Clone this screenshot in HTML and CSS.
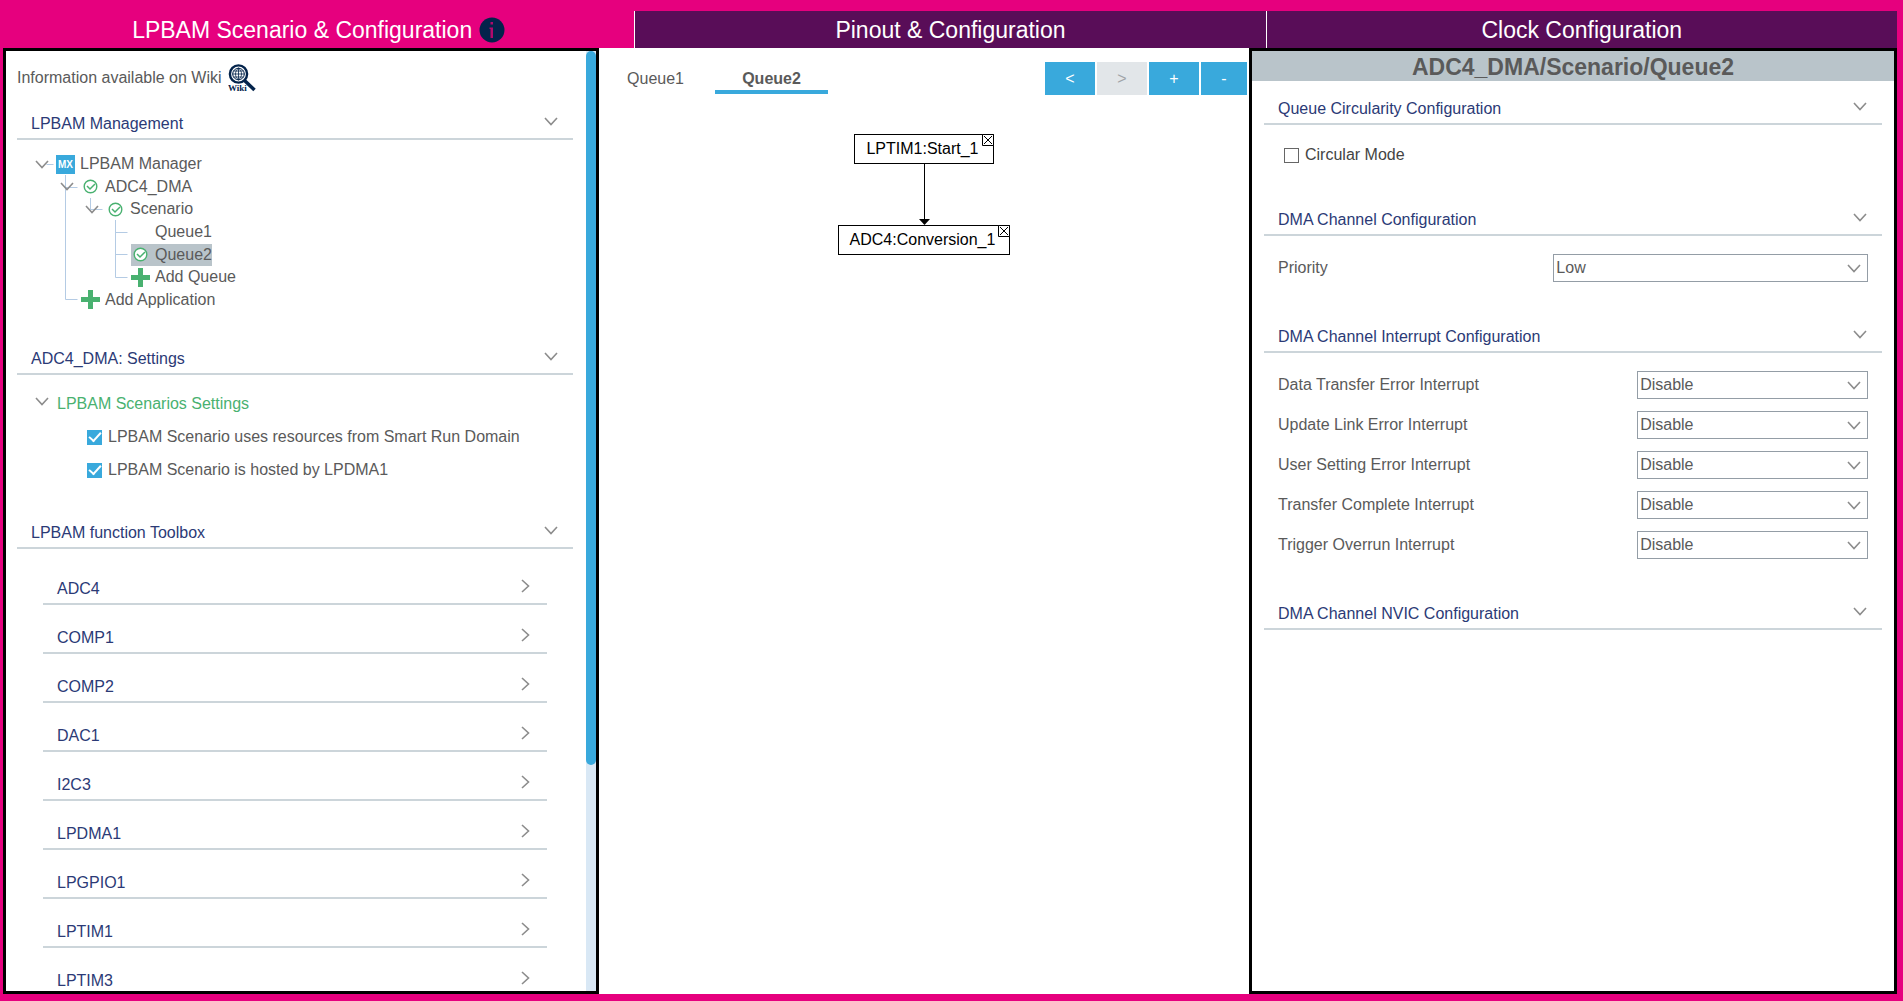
FILE: index.html
```
<!DOCTYPE html>
<html lang="en">
<head>
    <meta charset="UTF-8">
    <meta name="viewport" content="width=device-width, initial-scale=1.0">
    <title>LPBAM Scenario &amp; Configuration</title>
    <link rel="stylesheet" href="styles.css">
</head>
<body>
    <!-- shared icons -->
    <svg class="sprite" width="0" height="0">
        <symbol id="chevron-down" viewBox="0 0 14 9"><path d="M1 1 L7 7.5 L13 1" fill="none" stroke="#8c8c8c" stroke-width="1.6"/></symbol>
        <symbol id="chevron-right" viewBox="0 0 9 14"><path d="M1 1 L7.5 7 L1 13" fill="none" stroke="#8c8c8c" stroke-width="1.6"/></symbol>
        <symbol id="ok" viewBox="0 0 19 19"><circle cx="9.5" cy="9.5" r="6.3" fill="#fff" stroke="#49b170" stroke-width="1.4"/><path d="M6 9 L9 12 L14 7" fill="none" stroke="#49b170" stroke-width="1.5"/></symbol>
        <symbol id="plus" viewBox="0 0 19 19"><path d="M7 0h5v7h7v5h-7v7h-5v-7h-7v-5h7z" fill="#49b170"/></symbol>
    </svg>

    <nav class="main-tabs">
        <button class="main-tab active">LPBAM Scenario &amp; Configuration
            <svg class="info" viewBox="0 0 26 26"><circle cx="13" cy="13" r="12.5" fill="#03234b"/><path d="M11.5 5h2.5v2.5h-2.5zM10.5 10.5h3.5v10.500h-2.5v-9h-1z" fill="#b00a6c"/></svg>
        </button>
        <button class="main-tab">Pinout &amp; Configuration</button>
        <button class="main-tab">Clock Configuration</button>
    </nav>

    <main class="workspace">
        <aside class="panel left-panel">
            <div class="left-content">
                <a class="wiki" href="#">Information available on Wiki
                    <svg class="wiki-icon" viewBox="0 0 28 28">
                        <path d="M16 16 L26.5 26" stroke="#03234b" stroke-width="3.5"/>
                        <circle cx="10.5" cy="10" r="8.6" fill="#fff" stroke="#03234b" stroke-width="2.4"/>
                        <circle cx="10.5" cy="10" r="5.8" fill="none" stroke="#03234b"/>
                        <path d="M10.5 4v12M4.5 10h12M5.5 7h10M5.5 13h10M10.5 4c-4 3-4 9 0 12c4-3 4-9 0-12" fill="none" stroke="#03234b" stroke-width=".8"/>
                        <path d="M0 20h17l3 3v5h-20z" fill="#fff"/>
                        <text x="0" y="27" class="wiki-text">Wiki</text>
                    </svg>
                </a>

                <section class="section">
                    <h2 class="section-title">LPBAM Management<svg class="chevron"><use href="#chevron-down"/></svg></h2>
                    <div class="tree">
                        <svg class="tree-lines" width="160" height="158">
                            <path d="M29.5 11.5h7M48.5 22v124.5h12M48.500 34.5h12M73.500 45v11.5h12M98.5 67v57.5h12M98.5 79.5h12M98.5 101.5h12" fill="none" stroke="#b4cbe4"/>
                        </svg>
                        <div class="node level-1"><svg class="chevron"><use href="#chevron-down"/></svg><span class="node-label"><span class="mx">MX</span>LPBAM Manager</span></div>
                        <div class="node level-2"><svg class="chevron"><use href="#chevron-down"/></svg><span class="node-label"><svg class="icon"><use href="#ok"/></svg>ADC4_DMA</span></div>
                        <div class="node level-3"><svg class="chevron"><use href="#chevron-down"/></svg><span class="node-label"><svg class="icon"><use href="#ok"/></svg>Scenario</span></div>
                        <div class="node level-4"><span class="chevron"></span><span class="node-label"><span class="icon"></span>Queue1</span></div>
                        <div class="node level-4"><span class="chevron"></span><span class="node-label selected"><svg class="icon"><use href="#ok"/></svg>Queue2</span></div>
                        <div class="node level-4"><span class="chevron"></span><span class="node-label"><svg class="icon"><use href="#plus"/></svg>Add Queue</span></div>
                        <div class="node level-2"><span class="chevron"></span><span class="node-label"><svg class="icon"><use href="#plus"/></svg>Add Application</span></div>
                    </div>
                </section>

                <section class="section">
                    <h2 class="section-title">ADC4_DMA: Settings<svg class="chevron"><use href="#chevron-down"/></svg></h2>
                    <div class="settings">
                        <h3 class="settings-title"><svg class="chevron"><use href="#chevron-down"/></svg>LPBAM Scenarios Settings</h3>
                        <label class="check"><input type="checkbox" checked>LPBAM Scenario uses resources from Smart Run Domain</label>
                        <label class="check"><input type="checkbox" checked>LPBAM Scenario is hosted by LPDMA1</label>
                    </div>
                </section>

                <section class="section">
                    <h2 class="section-title">LPBAM function Toolbox<svg class="chevron"><use href="#chevron-down"/></svg></h2>
                    <div class="toolbox">
                        <button class="tool">ADC4<svg class="arrow"><use href="#chevron-right"/></svg></button>
                        <button class="tool">COMP1<svg class="arrow"><use href="#chevron-right"/></svg></button>
                        <button class="tool">COMP2<svg class="arrow"><use href="#chevron-right"/></svg></button>
                        <button class="tool">DAC1<svg class="arrow"><use href="#chevron-right"/></svg></button>
                        <button class="tool">I2C3<svg class="arrow"><use href="#chevron-right"/></svg></button>
                        <button class="tool">LPDMA1<svg class="arrow"><use href="#chevron-right"/></svg></button>
                        <button class="tool">LPGPIO1<svg class="arrow"><use href="#chevron-right"/></svg></button>
                        <button class="tool">LPTIM1<svg class="arrow"><use href="#chevron-right"/></svg></button>
                        <button class="tool">LPTIM3<svg class="arrow"><use href="#chevron-right"/></svg></button>
                    </div>
                </section>
            </div>
            <div class="scrollbar"><div class="thumb"></div></div>
        </aside>

        <section class="middle">
            <div class="queue-bar">
                <button class="queue-tab">Queue1</button>
                <button class="queue-tab active">Queue2</button>
                <div class="queue-actions">
                    <button class="action">&lt;</button>
                    <button class="action" disabled>&gt;</button>
                    <button class="action">+</button>
                    <button class="action last">-</button>
                </div>
            </div>
            <div class="diagram">
                <div class="box">LPTIM1:Start_1<svg class="close" viewBox="0 0 12 12"><path d="M.5.5h11v11h-11zM2 2l8 8M10 2l-8 8" fill="#fff" stroke="#000"/></svg></div>
                <svg class="link" viewBox="0 0 12 61"><path d="M6.5 0v56" stroke="#000"/><path d="M1 55h11l-5.5 6z"/></svg>
                <div class="box">ADC4:Conversion_1<svg class="close" viewBox="0 0 12 12"><path d="M.5.5h11v11h-11zM2 2l8 8M10 2l-8 8" fill="#fff" stroke="#000"/></svg></div>
            </div>
        </section>

        <aside class="panel right-panel">
            <h1 class="path">ADC4_DMA/Scenario/Queue2</h1>
            <section class="section">
                <h2 class="section-title">Queue Circularity Configuration<svg class="chevron"><use href="#chevron-down"/></svg></h2>
                <label class="check circular"><input type="checkbox">Circular Mode</label>
            </section>
            <section class="section">
                <h2 class="section-title">DMA Channel Configuration<svg class="chevron"><use href="#chevron-down"/></svg></h2>
                <div class="fields">
                    <div class="field wide"><label for="priority">Priority</label><div class="select"><select id="priority"><option>Low</option></select><svg class="chevron"><use href="#chevron-down"/></svg></div></div>
                </div>
            </section>
            <section class="section">
                <h2 class="section-title">DMA Channel Interrupt Configuration<svg class="chevron"><use href="#chevron-down"/></svg></h2>
                <div class="fields">
                    <div class="field"><label for="dte">Data Transfer Error Interrupt</label><div class="select"><select id="dte"><option>Disable</option></select><svg class="chevron"><use href="#chevron-down"/></svg></div></div>
                    <div class="field"><label for="ule">Update Link Error Interrupt</label><div class="select"><select id="ule"><option>Disable</option></select><svg class="chevron"><use href="#chevron-down"/></svg></div></div>
                    <div class="field"><label for="use">User Setting Error Interrupt</label><div class="select"><select id="use"><option>Disable</option></select><svg class="chevron"><use href="#chevron-down"/></svg></div></div>
                    <div class="field"><label for="tc">Transfer Complete Interrupt</label><div class="select"><select id="tc"><option>Disable</option></select><svg class="chevron"><use href="#chevron-down"/></svg></div></div>
                    <div class="field"><label for="to">Trigger Overrun Interrupt</label><div class="select"><select id="to"><option>Disable</option></select><svg class="chevron"><use href="#chevron-down"/></svg></div></div>
                </div>
            </section>
            <section class="section">
                <h2 class="section-title">DMA Channel NVIC Configuration<svg class="chevron"><use href="#chevron-down"/></svg></h2>
            </section>
        </aside>
    </main>
</body>
</html>
```
FILE: styles.css
```
* {
    box-sizing: border-box;
}
body {
    display: flex;
    flex-direction: column;
    height: 100vh;
    margin: 0;
    padding: 11px 6px 7px 3px;
    overflow: hidden;
    font-family: "Liberation Sans", Arial, sans-serif;
    font-size: 16px;
    line-height: 20px;
    color: #5a5a5a;
    background-color: #e6007e;
}
h1, h2, h3 {
    margin: 0;
    font-weight: normal;
}
button, select {
    font: inherit;
    color: inherit;
    border: none;
    border-radius: 0;
    padding: 0;
    background: none;
}
.sprite { position: absolute; }

/* top tabs */
.main-tabs {
    display: grid;
    grid-template-columns: repeat(3, 1fr);
    height: 37px;
}
.main-tab {
    display: flex;
    justify-content: center;
    align-items: center;
    gap: 7px;
    font-size: 23px;
    color: #fff;
    background-color: #590d58;
    border-left: 1px solid #fff;
}
.main-tab.active {
    background-color: #e6007e;
    border-left: none;
}
.info {
    width: 26px;
    height: 26px;
}

.workspace {
    flex: 1;
    min-height: 0;
    display: grid;
    grid-template-columns: 596fr 650fr 648fr;
    grid-template-rows: 100%;
    background-color: #fff;
}
.panel {
    border: 3px solid #000;
    background-color: #fff;
    overflow: hidden;
}
.chevron {
    flex: none;
    width: 14px;
    height: 9px;
}
.arrow {
    width: 9px;
    height: 14px;
}
.section-title {
    display: flex;
    justify-content: space-between;
    align-items: center;
    height: 32px;
    padding: 2px 15px 0 14px;
    font-size: 16px;
    color: #2b3a76;
    border-bottom: 2px solid #ccd5da;
}
.section-title .chevron { margin-bottom: 6px; }

/* left panel */
.left-panel { display: flex; }
.left-content {
    flex: 1;
    padding: 11px 13px 0 11px;
}
.wiki {
    display: flex;
    align-items: center;
    gap: 6px;
    height: 32px;
    color: inherit;
    text-decoration: none;
}
.wiki-icon {
    width: 28px;
    height: 28px;
}
.wiki-text {
    font-family: "Liberation Serif", serif;
    font-size: 9px;
    font-weight: bold;
    fill: #03234b;
}
.left-content .section-title { margin-top: 14px; }
.tree {
    position: relative;
    display: grid;
    grid-template-rows: repeat(7, 1fr);
    height: 158px;
    margin: 13px 0 32px;
}
.tree-lines {
    position: absolute;
    left: 0;
    top: 0;
}
.node {
    position: relative;
    display: flex;
    align-items: center;
    gap: 7px;
}
.level-1 { padding-left: 18px; }
.level-2 { padding-left: 43px; }
.level-3 { padding-left: 68px; }
.level-4 { padding-left: 93px; }
.node-label {
    display: flex;
    align-items: center;
    gap: 5px;
    height: 22px;
}
.selected { background-color: #b9c4ca; }
.icon, .mx {
    width: 19px;
    height: 19px;
}
.mx {
    font-size: 10px;
    font-weight: bold;
    text-align: center;
    color: #fff;
    background-color: #39a9dc;
}
.settings {
    padding-top: 19px;
    height: 128px;
}
.settings-title {
    display: flex;
    align-items: center;
    gap: 8px;
    padding-left: 18px;
    font-size: 16px;
    color: #49b170;
}
.settings-title .chevron { margin-bottom: 6px; }
.check {
    display: flex;
    align-items: center;
    gap: 6px;
}
.settings .check {
    margin: 13px 0 0 70px;
}
.check input {
    appearance: none;
    width: 15px;
    height: 15px;
    margin: 0;
    border: 1px solid #666;
    background-color: #fff;
}
.check input:checked {
    display: grid;
    place-items: center;
    border: none;
    background-color: #39a9dc;
}
.check input:checked::after {
    content: "";
    width: 10px;
    height: 5px;
    margin-bottom: 3px;
    border-left: 2px solid #fff;
    border-bottom: 2px solid #fff;
    transform: rotate(-48deg);
}
.toolbox {
    display: flex;
    flex-direction: column;
    padding: 7px 26px 0;
}
.tool {
    display: flex;
    flex: none;
    justify-content: space-between;
    align-items: end;
    height: 49px;
    padding: 0 17px 4px 14px;
    color: #2b3a76;
    border-bottom: 2px solid #ccd5da;
}
.tool .arrow { margin-bottom: 6px; }
.scrollbar {
    width: 10px;
    background-color: #d9e8f5;
}
.thumb {
    height: 76%;
    border-radius: 5px;
    background-color: #39a9dc;
}

/* middle */
.queue-bar {
    display: flex;
    gap: 3px;
    padding: 14px 2px 0 0;
    height: 47px;
}
.queue-tab {
    width: 113px;
    height: 32px;
    padding-top: 6px;
    border-bottom: 4px solid transparent;
}
.queue-tab.active {
    font-weight: bold;
    border-bottom-color: #39a9dc;
}
.queue-actions {
    display: flex;
    gap: 2px;
    height: 33px;
    margin-left: auto;
}
.action {
    width: 50px;
    color: #fff;
    background-color: #39a9dc;
}
.action.last { width: 46px; }
.action:disabled {
    color: #a0a4a8;
    background-color: #e2e6e9;
}
.diagram {
    display: flex;
    flex-direction: column;
    align-items: center;
    padding-top: 39px;
    color: #000;
}
.box {
    position: relative;
    padding: 4px 14px 4px 11px;
    border: 1px solid #000;
}
.close {
    position: absolute;
    right: -1px;
    top: -1px;
    width: 12px;
    height: 12px;
}
.link {
    width: 12px;
    height: 61px;
}

/* right panel */
.path {
    height: 30px;
    font-size: 23px;
    line-height: 32px;
    font-weight: bold;
    text-align: center;
    background-color: #b9c4ca;
}
.right-panel .section {
    padding: 0 12px;
    margin-bottom: 39px;
}
.path + .section { padding-top: 12px; }
.circular {
    padding: 20px 0 0 20px;
    color: #444;
}
.fields {
    display: grid;
    gap: 12px;
    padding: 18px 14px 0;
}
.field {
    display: grid;
    grid-template-columns: 14fr 9fr;
    align-items: center;
}
.field.wide { grid-template-columns: 7fr 8fr; }
.select { position: relative; }
.select select {
    appearance: none;
    display: block;
    width: 100%;
    height: 28px;
    padding-left: 2px;
    border: 1px solid #949da6;
    background-color: #fff;
}
.select .chevron {
    position: absolute;
    right: 7px;
    top: 10px;
    pointer-events: none;
}
```
